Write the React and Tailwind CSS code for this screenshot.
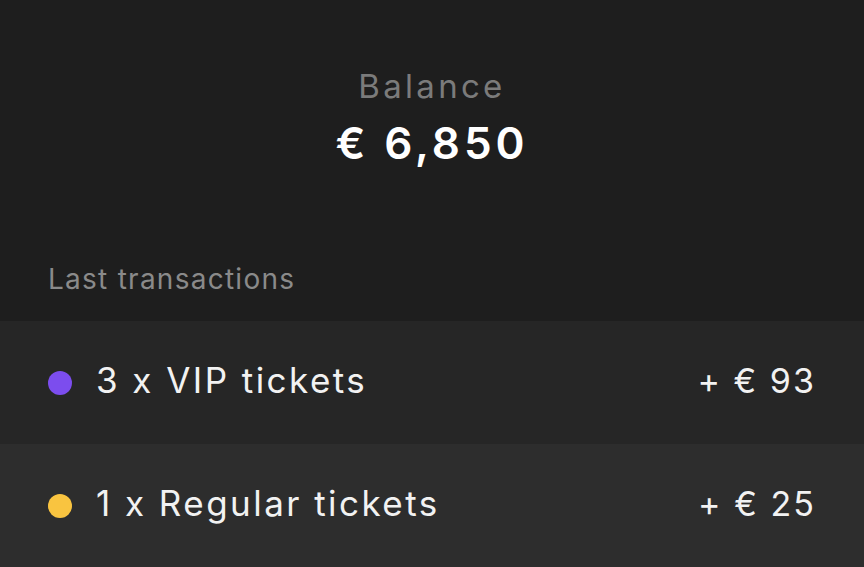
const transactions = [
  { id: 1, label: "3 x VIP tickets", amount: "+ € 93", dot: "bg-[#7c4dee]", row: "bg-[#262626]" },
  { id: 2, label: "1 x Regular tickets", amount: "+ € 25", dot: "bg-[#f9c440]", row: "bg-[#2d2d2d]" },
];

export default function App() {
  return (
    <div className="flex h-[567px] w-[864px] flex-col overflow-hidden bg-[#1e1e1e] font-['Inter',sans-serif] text-white">
      <div className="flex flex-col items-center pt-[66px]">
        <p className="text-[33px] leading-[40px] tracking-[0.1em] text-[#7b7b7b]">Balance</p>
        <p className="mt-[15px] text-[44px] font-semibold leading-[44px] tracking-[0.09em]">€ 6,850</p>
      </div>

      <p className="mt-[96px] px-[48px] text-[28px] leading-[36px] tracking-[0.045em] text-[#8a8a8a]">
        Last transactions
      </p>

      {/* list runs to the bottom edge, last row takes the leftover height */}
      <div className="mt-[24px] flex flex-1 flex-col">
        {transactions.map((t) => (
          <div key={t.id} className={`flex min-h-[122px] flex-1 items-center px-[48px] ${t.row}`}>
            <span className={`h-[24px] w-[24px] shrink-0 rounded-full ${t.dot}`} />
            <span className="ml-[24px] flex-1 pb-[4px] text-[35px] tracking-[0.07em] text-[#f2f2f2]">{t.label}</span>
            <span className="pb-[4px] text-[34px] tracking-[0.06em] text-[#f2f2f2]">{t.amount}</span>
          </div>
        ))}
      </div>
    </div>
  );
}
